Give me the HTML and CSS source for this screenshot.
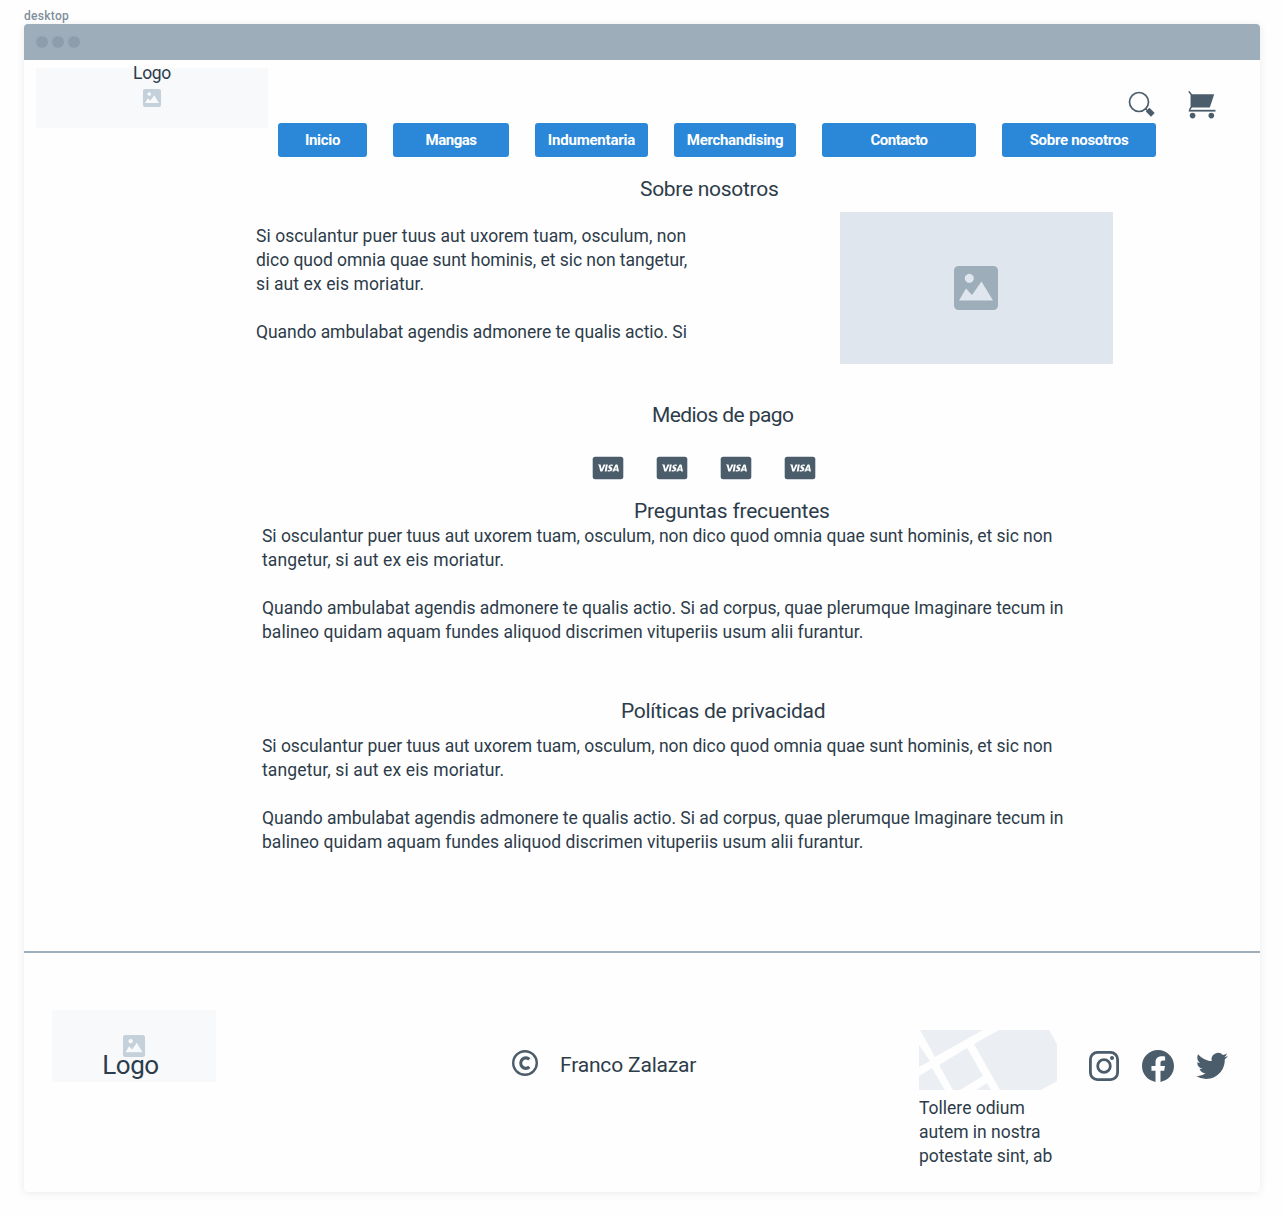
FILE: index.html
```html
<!DOCTYPE html>
<html lang="es">
<head>
<meta charset="utf-8">
<title>Sobre nosotros</title>
<link rel="stylesheet" href="styles.css">
</head>
<body>
<svg class="defs" aria-hidden="true">
  <symbol id="picture" viewBox="0 0 44 44">
    <path fill-rule="evenodd" d="M5 0H39Q44 0 44 5V39Q44 44 39 44H5Q0 44 0 39V5Q0 0 5 0ZM15.300 7.800a4.500 4.500 0 1 0 .01 0ZM5 34.500H39L27.500 15.500L18 29L12 22.500Z"/>
  </symbol>
  <symbol id="card" viewBox="0 0 32 24">
    <rect x=".7" y=".7" width="30.600" height="22.600" rx="2.500"/>
    <path fill="#fff" d="M5.700 8.500h2.900l1 4.800 1.900-4.800h2l-3.200 7.100h-2L7 9.900Q6.700 9.200 5.700 8.500ZM13.900 8.500h1.900l-1.200 7.100h-1.900ZM20.900 8.700l-.3 1.500c-1.400-.6-2.300-.4-2.300.1 0 .7 2.100.9 2.100 2.800 0 2.200-2.400 3-4.900 2.200l.3-1.600c1.300.7 2.600.5 2.600-.1 0-.8-2-.8-2-2.700 0-2 2.200-2.900 4.500-2.200ZM23.600 8.500h1.900l1.500 7.100h-1.800l-.2-1h-2.300l-.5 1h-2ZM24.200 10.600l-1 2.600h1.500Z"/>
  </symbol>
</svg>
<p class="frame-name">desktop</p>
<div class="window">
  <div class="titlebar"><i></i><i></i><i></i></div>
  <header class="header">
    <div class="logo"><span>Logo</span><svg><use href="#picture"/></svg></div>
    <div class="header-side">
      <div class="tools">
        <svg class="search" viewBox="1 1 28 28"><circle cx="12" cy="12" r="9.500" fill="none" stroke="currentColor" stroke-width="1.700"/><path d="M18.500 18.500L20.500 20.500" stroke="currentColor" stroke-width="1.500"/><path d="M18.800 21.400L22.400 17.800L27.700 23L24 26.700Z"/></svg>
        <svg class="cart" viewBox="0 0 28 28"><path d="M.8 .4L3.300 3.600V16L1.500 18.800" fill="none" stroke="currentColor" stroke-width="1.500"/><path d="M3 3.200H26.200L21.800 16.500H3.500Z"/><path d="M.8 18.800H27.500V20.600H.8Z"/><circle cx="4.600" cy="24.600" r="2.800"/><circle cx="23.300" cy="24.600" r="2.800"/></svg>
      </div>
      <nav class="nav">
        <a>Inicio</a>
        <a class="tight">Mangas</a>
        <a class="wide">Indumentaria</a>
        <a>Merchandising</a>
        <a class="tight">Contacto</a>
        <a>Sobre nosotros</a>
      </nav>
    </div>
  </header>
  <main class="main">
    <h1 class="title-about">Sobre nosotros</h1>
    <section class="about">
      <p><span class="about-1">Si osculantur puer tuus aut uxorem tuam, osculum, non</span><br><span class="about-2">dico quod omnia quae sunt hominis, et sic non tangetur,</span><br><span class="about-3">si aut ex eis moriatur.</span><br><br><span class="about-4">Quando ambulabat agendis admonere te qualis actio. Si</span></p>
      <div class="photo"><svg><use href="#picture"/></svg></div>
    </section>
    <h2 class="title-payment">Medios de pago</h2>
    <div class="cards"><svg><use href="#card"/></svg><svg><use href="#card"/></svg><svg><use href="#card"/></svg><svg><use href="#card"/></svg></div>
    <h2 class="title-faq">Preguntas frecuentes</h2>
    <p class="copy copy-faq"><span class="copy-1">Si osculantur puer tuus aut uxorem tuam, osculum, non dico quod omnia quae sunt hominis, et sic non</span><br><span class="copy-2">tangetur, si aut ex eis moriatur.</span><br><br><span class="copy-3">Quando ambulabat agendis admonere te qualis actio. Si ad corpus, quae plerumque Imaginare tecum in</span><br><span class="copy-4">balineo quidam aquam fundes aliquod discrimen vituperiis usum alii furantur.</span></p>
    <h2 class="title-privacy">Políticas de privacidad</h2>
    <p class="copy copy-privacy"><span class="copy-1">Si osculantur puer tuus aut uxorem tuam, osculum, non dico quod omnia quae sunt hominis, et sic non</span><br><span class="copy-2">tangetur, si aut ex eis moriatur.</span><br><br><span class="copy-3">Quando ambulabat agendis admonere te qualis actio. Si ad corpus, quae plerumque Imaginare tecum in</span><br><span class="copy-4">balineo quidam aquam fundes aliquod discrimen vituperiis usum alii furantur.</span></p>
  </main>
  <footer class="footer">
    <div class="logo logo-footer"><svg><use href="#picture"/></svg><span>Logo</span></div>
    <div class="credit">
      <svg viewBox="0 0 26 26"><circle cx="13" cy="13" r="11.800" fill="none" stroke="currentColor" stroke-width="2.400"/><path d="M17.300 9.300A5 5.300 0 1 0 17.300 16.900" fill="none" stroke="currentColor" stroke-width="3.200"/></svg>
      <span>Franco Zalazar</span>
    </div>
    <div class="place">
      <svg class="map" viewBox="0 0 138 60"><path d="M1 0H64L16 27ZM0 15L11 31 0 37ZM0 46L13 38 26 60H0ZM20 35L48 18 64 46 41 60H34ZM57 60L68 53 72 60ZM55 14L80 0H130L138 14V51L122 60H81Z"/></svg>
      <p>Tollere odium<br>autem in nostra<br><span class="place-3">potestate sint, ab</span></p>
    </div>
    <div class="social">
      <svg viewBox="0 0 32 32"><rect x="2.400" y="2.400" width="27.200" height="27.200" rx="7" fill="none" stroke="currentColor" stroke-width="2.800"/><circle cx="16" cy="16" r="6.300" fill="none" stroke="currentColor" stroke-width="2.800"/><circle cx="24" cy="8" r="2"/></svg>
      <svg viewBox="0 0 24 24"><path d="M24 12.073C24 5.446 18.627.073 12 .073S0 5.446 0 12.073c0 5.990 4.388 10.954 10.125 11.854v-8.385H7.078v-3.470h3.047V9.430c0-3.007 1.792-4.669 4.533-4.669 1.312 0 2.686.235 2.686.235v2.953H15.830c-1.491 0-1.956.925-1.956 1.874v2.250h3.328l-.532 3.470h-2.796v8.385C19.612 23.027 24 18.062 24 12.073z"/></svg>
      <svg viewBox="0 0 24 24"><path d="M23.953 4.570a10 10 0 01-2.825.775 4.958 4.958 0 002.163-2.723c-.951.555-2.005.959-3.127 1.184a4.920 4.920 0 00-8.384 4.482C7.690 8.095 4.067 6.130 1.640 3.162a4.822 4.822 0 00-.666 2.475c0 1.710.870 3.213 2.188 4.096a4.904 4.904 0 01-2.228-.616v.06a4.923 4.923 0 003.946 4.827 4.996 4.996 0 01-2.212.085 4.936 4.936 0 004.604 3.417 9.867 9.867 0 01-6.102 2.105c-.39 0-.779-.023-1.170-.067a13.995 13.995 0 007.557 2.209c9.053 0 13.998-7.496 13.998-13.985 0-.210 0-.420-.015-.630A9.935 9.935 0 0024 4.590z"/></svg>
    </div>
  </footer>
</div>
</body>
</html>
```
FILE: styles.css
```css
* { box-sizing: border-box; }
body { margin: 0; padding: 8px 24px 24px; height: 1216px; background: #fefefe; color: #2d3c4a; font: 17.5px/24px Roboto, sans-serif; white-space: nowrap; }
h1, h2, p { margin: 0; font-weight: 400; }
svg { display: block; fill: currentColor; flex: none; }
.defs { position: absolute; width: 0; height: 0; }
.frame-name { height: 16px; color: #7f8e9c; font-size: 12px; line-height: 16px; font-weight: 500; letter-spacing: .3px; }

/* Browser window */
.window { height: 1168px; background: #fefefe; border-radius: 4px; box-shadow: 0 1px 8px rgba(0, 0, 0, .08); display: flex; flex-direction: column; }
.titlebar { height: 36px; flex: none; padding-left: 12px; display: flex; align-items: center; gap: 4px; background: #9eadba; border-radius: 4px 4px 0 0; }
.titlebar i { width: 12px; height: 12px; border-radius: 50%; background: #8e9dac; }

/* Header */
.header { display: flex; gap: 10px; padding: 8px 0 0 12px; height: 97px; }
.logo { width: 232px; height: 60px; background: #f7f9fb; display: flex; flex-direction: column; align-items: center; letter-spacing: -.35px; }
.logo span { margin-top: -7px; }
.logo svg { width: 18px; height: 18px; margin-top: 4px; color: #c4d0da; }
.header-side { width: 938px; }
.tools { height: 55px; padding-top: 23px; display: flex; justify-content: flex-end; gap: 32px; color: #4b5c6b; }
.tools svg { width: 28px; height: 28px; }
.nav { display: grid; grid-template-columns: 89px 116px 113px 122px 154px 154px; gap: 26px; }
.nav a { height: 34px; border-radius: 3px; background: #2b88d9; color: #fff; font-size: 15px; font-weight: 700; line-height: 34px; text-align: center; letter-spacing: -.3px; }
.nav .tight { letter-spacing: -.48px; }
.nav .wide { letter-spacing: -.2px; }

/* Content */
.main { height: 794px; }
.main h1, .main h2 { font-size: 21px; line-height: 24px; }
.title-about { padding: 20px 0 0 616px; letter-spacing: -.29px; }
.about { display: flex; justify-content: space-between; padding: 11px 147px 0 232px; height: 202px; }
.about p { padding-top: 12px; }
.about-1 { letter-spacing: .05px; }
.about-2 { letter-spacing: -.033px; }
.about-3 { letter-spacing: .1px; }
.about-4 { letter-spacing: -.06px; }
.photo { width: 273px; height: 152px; padding-right: 1px; background: #dfe6ed; color: #9eadba; display: grid; place-items: center; }
.photo svg { width: 44px; height: 44px; }
.title-payment { padding-left: 628px; letter-spacing: -.59px; }
.cards { display: flex; gap: 32px; padding: 29px 0 19px 568px; color: #4b5c6b; }
.cards svg { width: 32px; height: 24px; }
.title-faq { padding-left: 610px; letter-spacing: -.22px; }
.copy { padding-left: 238px; }
.copy-faq { padding-top: 1px; }
.copy-1 { letter-spacing: -.027px; }
.copy-2 { letter-spacing: .13px; }
.copy-3 { letter-spacing: -.02px; }
.copy-4 { letter-spacing: .04px; }
.title-privacy { padding: 55px 0 0 597px; letter-spacing: -.28px; }
.copy-privacy { padding-top: 11px; }

/* Footer */
.footer { flex: 1; border-top: 2px solid #9eadba; display: flex; padding-left: 28px; }
.logo-footer { width: 164px; height: 72px; margin-top: 57px; font-size: 26px; line-height: 32px; letter-spacing: -.5px; }
.logo-footer svg { width: 22px; height: 22px; margin-top: 25px; }
.logo-footer span { margin-top: -8px; margin-right: 7px; }
.credit { display: flex; gap: 22px; margin: 97px 0 0 296px; width: 407px; font-size: 21px; line-height: 30px; letter-spacing: -.18px; }
.credit svg { width: 26px; height: 26px; color: #4b5c6b; }
.place { width: 138px; margin-top: 77px; }
.map { width: 138px; height: 60px; color: #ebeff4; }
.place p { padding-top: 6px; }
.place-3 { letter-spacing: -.06px; }
.social { display: flex; gap: 22px; margin: 97px 0 0 31px; color: #4b5c6b; }
.social svg { width: 32px; height: 32px; }
```
